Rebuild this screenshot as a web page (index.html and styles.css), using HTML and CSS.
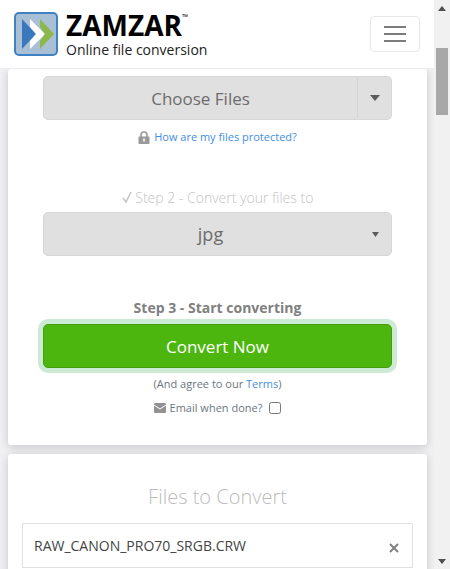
FILE: index.html
```html
<!DOCTYPE html>
<html lang="en">
<head>
    <meta charset="UTF-8">
    <meta name="viewport" content="width=device-width, initial-scale=1.0">
    <title>Zamzar - Online file conversion</title>
    <link rel="stylesheet" href="styles.css">
</head>
<body>

<div class="page">
    <header class="navbar">
        <a class="brand" href="#">
            <svg class="logo" viewBox="0 0 44 44" aria-hidden="true">
                <rect x="1" y="1" width="42" height="42" rx="4" fill="#a9bfd6" stroke="#3f82c4" stroke-width="2"/>
                <path d="M8 7l14 15L8 37z" fill="#3a78bd"/>
                <path d="M16 7l15 15-15 15v-8l6-7-6-7z" fill="#ffffff"/>
                <path d="M26 7l14 15-14 15v-8l5-7-5-7z" fill="#8cb84a"/>
            </svg>
            <span class="brand-text">
                <span class="brand-name">ZAMZAR<sup>™</sup></span>
                <span class="brand-tag">Online file conversion</span>
            </span>
        </a>
        <button class="menu" type="button" aria-label="Menu">
            <svg width="22" height="18" viewBox="0 0 22 18" aria-hidden="true">
                <path d="M0 2h22M0 9h22M0 16h22" stroke="#7c7c7c" stroke-width="2"/>
            </svg>
        </button>
    </header>

    <main>
        <form class="card convert">
            <div class="choose">
                <button class="choose-files" type="button">Choose Files</button>
                <button class="choose-more" type="button" aria-label="More sources">
                    <svg width="10" height="6" viewBox="0 0 10 6" aria-hidden="true"><path d="M0 0h10L5 6z" fill="#5c5a5e"/></svg>
                </button>
            </div>
            <p class="note protect">
                <svg width="12" height="13" viewBox="0 0 12 13" aria-hidden="true">
                    <path d="M3 6V4a3 3 0 0 1 6 0v2" fill="none" stroke="#999" stroke-width="1.6"/>
                    <rect x="0.5" y="5.5" width="11" height="7.5" rx="1" fill="#999"/>
                    <path d="M5 7.500h2v3H5z" fill="#eee"/>
                </svg>
                <a href="#">How are my files protected?</a>
            </p>

            <label class="step step-done" for="format">
                <svg width="10" height="12" viewBox="0 0 10 12" aria-hidden="true"><path d="M1 7l3 4 5-10" fill="none" stroke="#c4c4c4" stroke-width="1.5"/></svg>
                Step 2 - Convert your files to
            </label>
            <div class="format">
                <select id="format">
                    <option>jpg</option>
                    <option>png</option>
                    <option>pdf</option>
                </select>
                <svg class="caret" width="7" height="5" viewBox="0 0 7 5" aria-hidden="true"><path d="M0 0h7L3.500 5z" fill="#5c5a5e"/></svg>
            </div>

            <p class="step step-now">Step 3 - Start converting</p>
            <button class="convert-now" type="submit">Convert Now</button>
            <p class="note terms">(And agree to our <a href="#">Terms</a>)</p>
            <p class="note email">
                <svg width="12" height="10" viewBox="0 0 12 10" aria-hidden="true">
                    <rect width="12" height="10" rx="1" fill="#929292"/>
                    <path d="M0 2l6 4 6-4" fill="none" stroke="#fff"/>
                </svg>
                <label for="email">Email when done?</label>
                <input type="checkbox" id="email">
            </p>
        </form>

        <section class="card files">
            <h2>Files to Convert</h2>
            <div class="file">
                <span>RAW_CANON_PRO70_SRGB.CRW</span>
                <button class="remove" type="button" aria-label="Remove file">
                    <svg width="10" height="10" viewBox="0 0 10 10" aria-hidden="true"><path d="M1 1l8 8M9 1L1 9" stroke="#808080" stroke-width="2"/></svg>
                </button>
            </div>
        </section>
    </main>
</div>

<div class="scrollbar" aria-hidden="true">
    <svg width="8" height="5" viewBox="0 0 8 5"><path d="M4 0l4 5H0z" fill="#505050"/></svg>
    <div class="thumb"></div>
    <svg class="down" width="8" height="5" viewBox="0 0 8 5"><path d="M0 0h8L4 5z" fill="#505050"/></svg>
</div>

</body>
</html>
```
FILE: styles.css
```css
* {
    box-sizing: border-box;
}
body {
    margin: 0;
    height: 100vh;
    display: flex;
    overflow: hidden;
    background-color: #f1f0f2;
    color: #444;
    font-family: "Open Sans", "Noto Sans", sans-serif;
    font-size: 14px;
}
p, h2 {
    margin: 0;
}
a {
    color: #3f8ee8;
    text-decoration: none;
}
button {
    font-family: inherit;
    cursor: pointer;
}
.page {
    flex: 1;
    min-width: 0;
}
/* Header */
.navbar {
    position: relative;
    z-index: 1;
    display: flex;
    align-items: center;
    justify-content: space-between;
    height: 69px;
    padding: 0 14px;
    background-color: #fff;
    border-bottom: 1px solid #ececf0;
}
.brand {
    display: flex;
    align-items: center;
    gap: 8px;
    color: #000;
}
.logo {
    width: 44px;
    height: 44px;
}
.brand-text {
    display: flex;
    flex-direction: column;
    padding-top: 4px;
}
.brand-name {
    display: flex;
    font-size: 28px;
    font-weight: 700;
    line-height: 28px;
}
.brand-name sup {
    font-size: 8px;
    font-weight: 400;
    line-height: 12px;
}
.brand-tag {
    font-size: 14px;
    line-height: 22px;
    color: #222;
}
.menu {
    display: flex;
    align-items: center;
    justify-content: center;
    width: 50px;
    height: 36px;
    padding: 0;
    background-color: #fff;
    border: 1px solid #e6e6ec;
    border-radius: 4px;
}
/* Cards */
.card {
    margin: 0 7px 9px 8px;
    background-color: #fff;
    border-radius: 3px;
    box-shadow: 0 2px 10px rgba(0, 0, 0, 0.18);
}
.convert {
    display: flex;
    flex-direction: column;
    padding: 7px 35px 29px;
    text-align: center;
}
.choose {
    display: flex;
    height: 44px;
}
.choose button {
    background-color: #e0e0e0;
    border: 1px solid #d6d6d6;
    color: #6c6c6c;
}
.choose .choose-files {
    flex: 1;
    font-size: 17px;
    border-radius: 5px 0 0 5px;
}
.choose .choose-more {
    display: flex;
    align-items: center;
    justify-content: center;
    width: 34px;
    padding: 0;
    border-left: 0;
    border-radius: 0 5px 5px 0;
}
.note {
    font-size: 11px;
    line-height: 16px;
    color: #6c757d;
}
.protect {
    display: flex;
    align-items: center;
    justify-content: center;
    gap: 4px;
    margin-top: 9px;
}
.step {
    font-size: 14px;
    line-height: 20px;
}
.step-done {
    margin: 43px 0 4px;
    color: #c4c4c4;
    font-weight: 300;
}
.format {
    position: relative;
}
.format select {
    display: block;
    width: 100%;
    height: 44px;
    padding: 0 22px 0 8px;
    appearance: none;
    background-color: #e0e0e0;
    border: 1px solid #d6d6d6;
    border-radius: 5px;
    color: #6c6c6c;
    font-family: inherit;
    font-size: 18px;
    text-align: center;
    text-align-last: center;
}
.caret {
    position: absolute;
    top: 20px;
    right: 13px;
    pointer-events: none;
}
.step-now {
    margin: 42px 0 6px;
    color: #808080;
    font-weight: 700;
}
.convert-now {
    height: 44px;
    background-color: #4db60e;
    border: 1px solid #439f0c;
    border-radius: 5px;
    box-shadow: 0 0 0 5px #cdead5;
    color: #fff;
    font-size: 17px;
}
.terms {
    margin-top: 8px;
}
.email {
    display: flex;
    align-items: center;
    justify-content: center;
    gap: 4px;
    margin-top: 8px;
}
.email input {
    width: 12px;
    height: 12px;
    margin: 0 0 0 3px;
}
/* File list */
.files {
    padding: 28px 14px;
}
.files h2 {
    margin-bottom: 11px;
    color: #bcbcbc;
    font-size: 20px;
    font-weight: 300;
    line-height: 30px;
    text-align: center;
}
.file {
    display: flex;
    align-items: center;
    justify-content: space-between;
    height: 45px;
    padding: 0 13px 0 11px;
    border: 1px solid #dee2e6;
    font-size: 14px;
}
.remove {
    display: flex;
    padding: 4px 0 0;
    background: none;
    border: 0;
}
/* Scrollbar */
.scrollbar {
    display: flex;
    flex-direction: column;
    align-items: center;
    width: 16px;
    padding: 6px 0 5px;
    background-color: #f1f1f1;
}
.thumb {
    width: 12px;
    height: 67px;
    margin-top: 37px;
    background-color: #a8a8a8;
}
.down {
    margin-top: auto;
}
```
